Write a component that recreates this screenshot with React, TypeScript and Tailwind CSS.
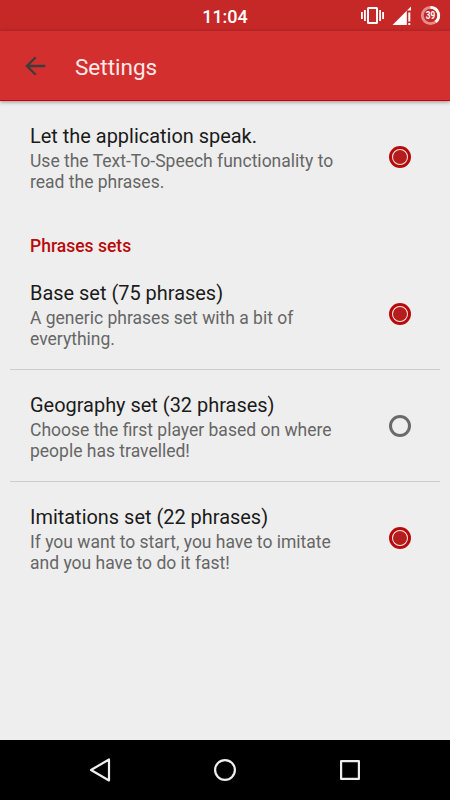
import clsx from "clsx";

const sets = [
  {
    title: "Base set (75 phrases)",
    summary: "A generic phrases set with a bit of everything.",
    checked: true,
  },
  {
    title: "Geography set (32 phrases)",
    summary: "Choose the first player based on where people has travelled!",
    checked: false,
  },
  {
    title: "Imitations set (22 phrases)",
    summary: "If you want to start, you have to imitate and you have to do it fast!",
    checked: true,
  },
];

export default function App() {
  return (
    <div className="flex h-[800px] w-[450px] flex-col overflow-hidden bg-[#eeeeee] font-['Roboto',sans-serif]">
      <StatusBar />
      <header className="z-10 flex h-[70px] shrink-0 items-center border-b border-[#cc0000] bg-[#d32f2f] pl-[25px] shadow-[0_1px_4px_rgba(0,0,0,0.4)]">
        <svg width="21" height="20" viewBox="0 0 21 20" fill="none" stroke="#3f3c3c" strokeWidth="2.3">
          <path d="M20.2 10H2M10.7 1.2 1.9 10l8.8 8.8" />
        </svg>
        <h1 className="ml-[29px] pt-[3px] text-[22.5px] leading-[26px] text-[#fbe9e9]">Settings</h1>
      </header>

      <main className="flex-1">
        <PreferenceRow
          title="Let the application speak."
          summary="Use the Text-To-Speech functionality to read the phrases."
          checked
        />
        <h2 className="h-[46px] pt-[24px] pl-[30px] text-[17.5px] leading-[21px] font-medium text-[#b90a0a]">
          Phrases sets
        </h2>
        {sets.map((s, i) => (
          <div key={s.title}>
            {i > 0 && <div className="mx-2.5 h-px bg-[#cdcdcd]" />}
            <PreferenceRow {...s} />
          </div>
        ))}
      </main>

      <NavigationBar />
    </div>
  );
}

function PreferenceRow({
  title,
  summary,
  checked,
}: {
  title: string;
  summary: string;
  checked: boolean;
}) {
  return (
    <section className="flex h-[111px] pr-[39px] pl-[30px]">
      <div className="w-[320px] pt-[23px]">
        <h3 className="text-[19.95px] leading-[24px] text-[#1b1b1b]">{title}</h3>
        <p className="mt-[3px] text-[17.5px] leading-[20.5px] text-[#666666]">{summary}</p>
      </div>
      <Toggle checked={checked} />
    </section>
  );
}

function Toggle({ checked }: { checked: boolean }) {
  return (
    <span
      role="checkbox"
      aria-checked={checked}
      className={clsx(
        "mt-[45px] ml-auto grid size-[22px] shrink-0 place-items-center rounded-full border-[3px]",
        checked ? "border-[#b90a0a]" : "border-[#6a6a6a]"
      )}
    >
      {checked && <span className="size-[14px] rounded-full bg-[#b71c1c]" />}
    </span>
  );
}

function StatusBar() {
  return (
    <div className="relative h-[31px] shrink-0 bg-[#c62828] text-white">
      <p className="pt-[6px] text-center text-[18px] leading-[21px] font-medium">11:04</p>
      <svg className="absolute top-0 right-0" width="90" height="31" viewBox="360 0 90 31" fill="#fff">
        {/* vibrate */}
        <rect x="368" y="8" width="9" height="15" rx="0.5" fill="none" stroke="#fff" strokeWidth="2" />
        <path d="M361 12h1.8v7H361zM364 10h1.8v11H364zM379.2 10h1.8v11h-1.8zM382.2 12h1.8v7h-1.8z" />
        {/* signal */}
        <path d="M392.5 25 411 6.5v4h-4.2V25z" />
        <path d="M408.3 12.5h2v9h-2zM408.3 23h2v2h-2z" />
        {/* battery */}
        <circle cx="430.5" cy="15.5" r="8.2" fill="none" stroke="#e38f8f" strokeWidth="2.8" />
        <path
          d="M430.5 7.3a8.2 8.2 0 0 1 5.2 14.5"
          fill="none"
          stroke="#fff"
          strokeWidth="2.8"
        />
        <text
          x="430.5"
          y="19"
          textAnchor="middle"
          textLength="9.5"
          lengthAdjust="spacingAndGlyphs"
          className="text-[10px] font-bold"
        >
          39
        </text>
      </svg>
    </div>
  );
}

function NavigationBar() {
  return (
    <nav className="flex h-[60px] shrink-0 items-center justify-between bg-black px-[87px]">
      <svg width="26" height="26" viewBox="0 0 26 26" fill="none" stroke="#eeeeee" strokeWidth="2.2" strokeLinejoin="round">
        <path d="M4 13 22 2.5v21z" />
      </svg>
      <svg width="26" height="26" viewBox="0 0 26 26" fill="none" stroke="#eeeeee" strokeWidth="2.2">
        <circle cx="13" cy="13" r="9.9" />
      </svg>
      <svg width="26" height="26" viewBox="0 0 26 26" fill="none" stroke="#eeeeee" strokeWidth="2.2" strokeLinejoin="round">
        <path d="M4.1 4.1h17.8v17.8H4.1z" />
      </svg>
    </nav>
  );
}
